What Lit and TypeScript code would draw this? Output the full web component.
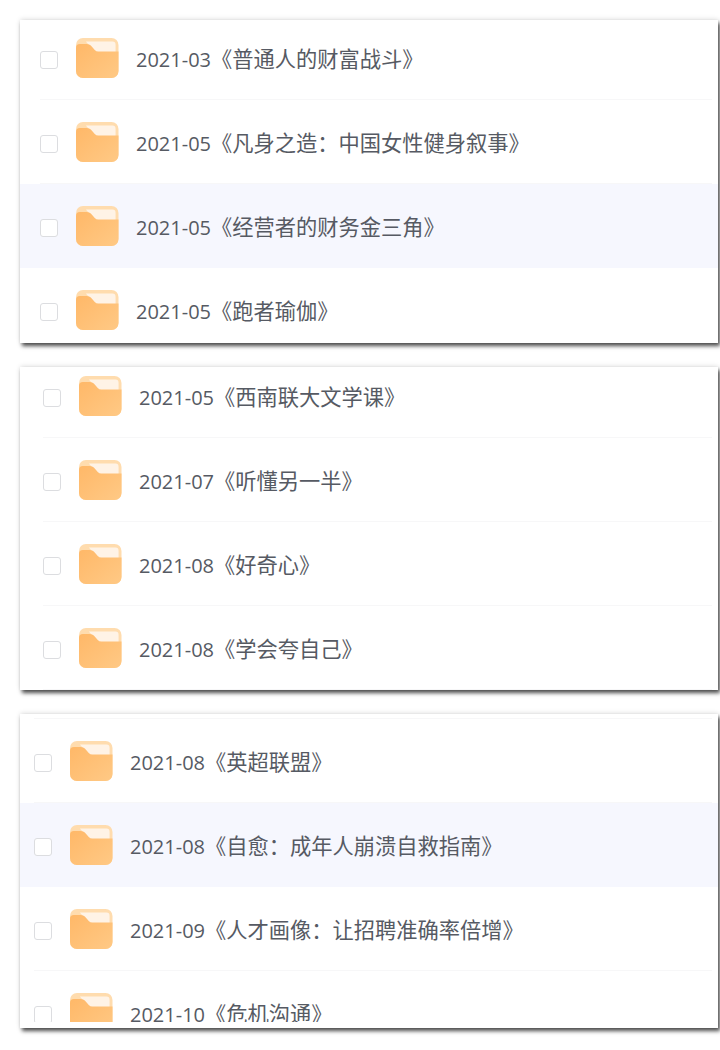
import { LitElement, html, css, svg } from "lit";
import { customElement } from "lit/decorators.js";

interface Row { d: string; t: string; hl?: boolean }
interface Card { cls: string; rows: Row[] }

const cards: Card[] = [
  { cls: "c1", rows: [
    { d: "2021-03", t: "《普通人的财富战斗》" },
    { d: "2021-05", t: "《凡身之造：中国女性健身叙事》" },
    { d: "2021-05", t: "《经营者的财务金三角》", hl: true },
    { d: "2021-05", t: "《跑者瑜伽》" },
  ]},
  { cls: "c2", rows: [
    { d: "2021-05", t: "《西南联大文学课》" },
    { d: "2021-07", t: "《听懂另一半》" },
    { d: "2021-08", t: "《好奇心》" },
    { d: "2021-08", t: "《学会夸自己》" },
  ]},
  { cls: "c3", rows: [
    { d: "2021-08", t: "《英超联盟》" },
    { d: "2021-08", t: "《自愈：成年人崩溃自救指南》", hl: true },
    { d: "2021-09", t: "《人才画像：让招聘准确率倍增》" },
    { d: "2021-10", t: "《危机沟通》" },
  ]},
];

const folder = svg`<svg class="folder" width="42.5" height="40" viewBox="0 0 43 40" preserveAspectRatio="none">
  <defs>
    <linearGradient id="fb" x1="0" y1="0" x2="1" y2="1">
      <stop offset="0" stop-color="#ffb868"/>
      <stop offset="1" stop-color="#ffc985"/>
    </linearGradient>
  </defs>
  <path d="M7 0H36A7 7 0 0 1 43 7V33A7 7 0 0 1 36 40H7A7 7 0 0 1 0 33V7A7 7 0 0 1 7 0Z" fill="#ffdcae"/>
  <path d="M10 3.500H37A3 3 0 0 1 40 6.500V15H20Z" fill="#fff3e6"/>
  <path d="M0 10Q0 6 4 6H11Q13.500 6 15 7.500L19 12Q20.500 13.500 22.500 13.500H43V33A7 7 0 0 1 36 40H7A7 7 0 0 1 0 33Z" fill="url(#fb)"/>
</svg>`;

@customElement("app-root")
export class AppRoot extends LitElement {
  static styles = css`
    :host {
      display: block;
      width: 720px;
      height: 1050px;
      background: #fff;
      overflow: hidden;
      font-family: "Open Sans", "Noto Sans CJK SC", sans-serif;
    }
    .page {
      display: flex;
      flex-direction: column;
      padding: 20px 2px 0 20px;
    }
    .card {
      background: #fff;
      overflow: hidden;
      box-shadow: 2px 3px 4px rgba(0, 0, 0, 0.7), 0 -1px 5px rgba(0, 0, 0, 0.1);
    }
    .c1 { height: 323px; margin-bottom: 24px; }
    .c2 { height: 323px; margin-bottom: 24px; }
    .c3 { height: 314px; }
    .list { display: flex; flex-direction: column; }
    .c1 .list { margin-top: -4px; }
    .c2 .list { margin-top: -13px; }
    .c3 .list { height: 308px; overflow: hidden; }
    .cap {
      flex: none;
      height: 5px;
      box-sizing: border-box;
      margin: 0 6px 0 14px;
      border-bottom: 1px solid #f7f7f8;
    }
    .row {
      position: relative;
      flex: none;
      height: 84px;
      box-sizing: border-box;
      display: flex;
      align-items: center;
      padding-left: 20px;
    }
    .c2 .row { padding-left: 23px; }
    .c3 .row { padding-left: 14px; }
    .row.hl { background: #f6f7fe; }
    .row::after {
      content: "";
      position: absolute;
      left: 20px;
      right: 6px;
      bottom: 0;
      height: 1px;
      background: #f7f7f8;
    }
    .c2 .row::after { left: 23px; }
    .c3 .row::after { left: 14px; }
    .row.hl::after { background: transparent; }
    .check {
      flex: none;
      width: 18px;
      height: 18px;
      box-sizing: border-box;
      border: 1px solid #dcdde0;
      border-radius: 3px;
      background: #fff;
      margin-top: 4px;
    }
    .folder {
      flex: none;
      display: block;
      margin: 0 17.5px 0 18px;
    }
    .text {
      font-size: 21.25px;
      line-height: 28px;
      color: #565a63;
      white-space: nowrap;
      margin-top: 3px;
    }
    .date { font-size: 20px; }
  `;

  render() {
    return html`<div class="page">
      ${cards.map(
        (c) => html`<section class="card ${c.cls}">
          <div class="list">
            ${c.cls === "c3" ? html`<div class="cap"></div>` : ""}
            ${c.rows.map(
              (r) => html`<div class="row ${r.hl ? "hl" : ""}">
                <span class="check"></span>
                ${folder}
                <span class="text"><span class="date">${r.d}</span>${r.t}</span>
              </div>`
            )}
          </div>
        </section>`
      )}
    </div>`;
  }
}
